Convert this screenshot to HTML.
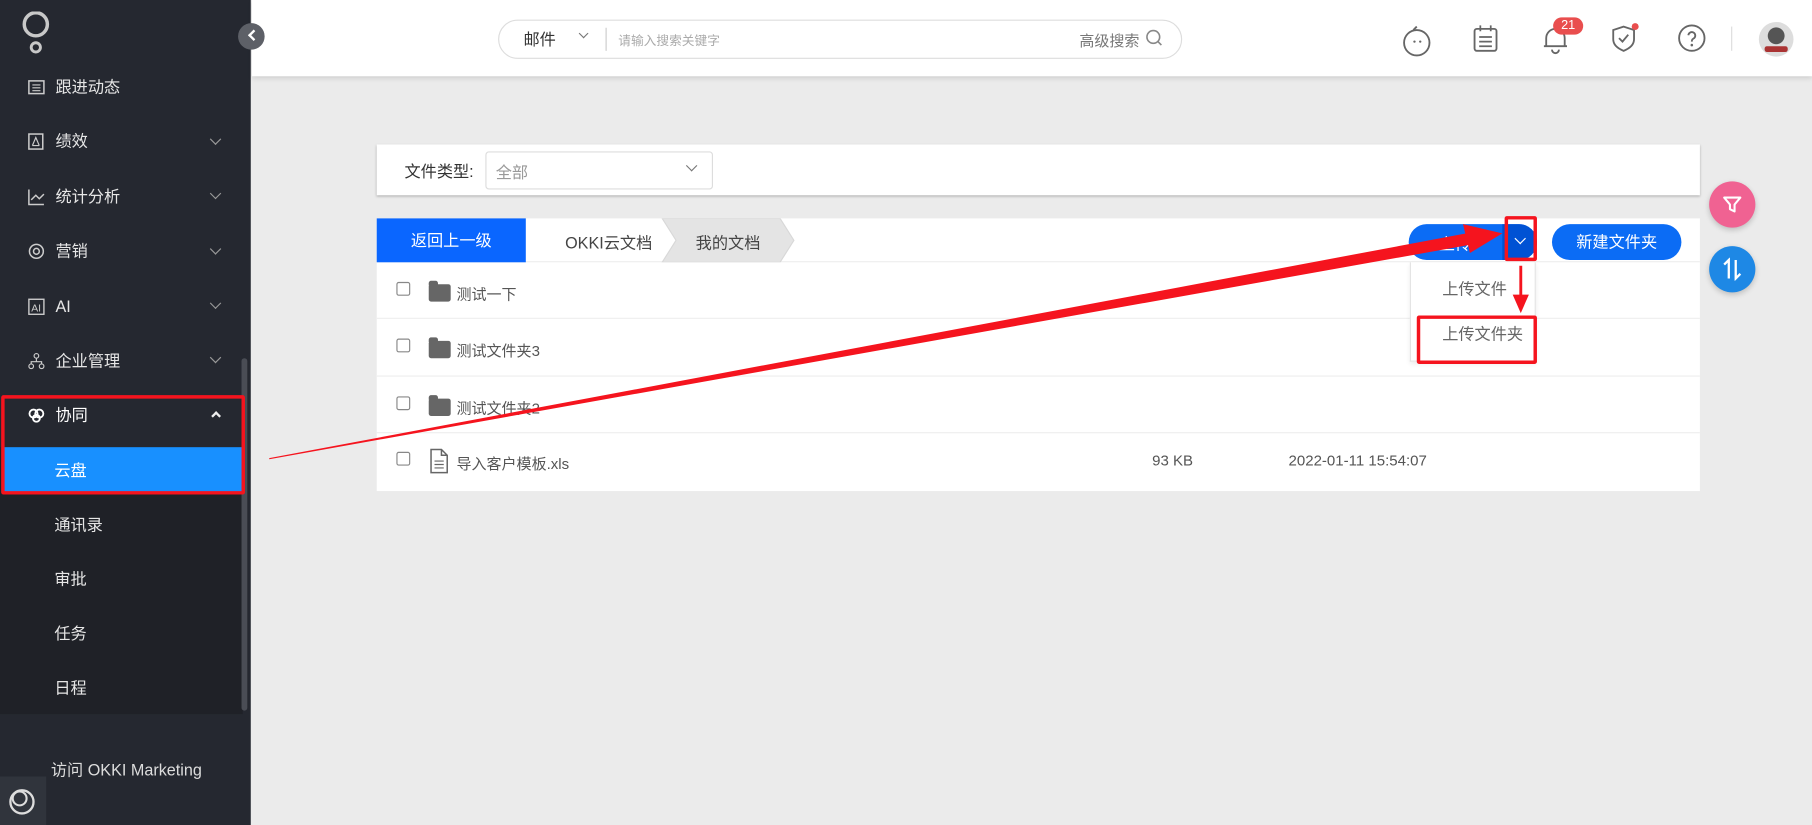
<!DOCTYPE html>
<html><head><meta charset="utf-8"><style>
*{margin:0;padding:0;box-sizing:border-box}
html,body{width:1812px;height:825px;overflow:hidden;background:#ebebeb}
#w{position:absolute;left:0;top:0;width:1568px;height:714px;transform:scale(1.15561,1.15546);transform-origin:0 0;font-family:"Liberation Sans","Noto Sans CJK SC",sans-serif;background:#ebebeb}
.a{position:absolute}
.sb{left:0;top:0;width:217px;height:714px;background:#252830}
.mi{position:absolute;left:24px;color:#e6e6e6;font-size:14px;height:20px;line-height:20px;display:flex;align-items:center}
.mi svg{margin-right:9px}
.chev{position:absolute;left:183px;width:7px;height:7px;border-right:1.5px solid #999;border-bottom:1.5px solid #999;transform:rotate(45deg)}
.sub{position:absolute;left:47px;color:#e6e6e6;font-size:14px}
.t{font-size:13px;color:#555;position:absolute}
.row{position:absolute;left:0;width:1145px;height:49px;border-bottom:1.5px solid #eee}
.cb{position:absolute;left:17px;width:12px;height:12px;border:1px solid #888;border-radius:2px}
.fd{position:absolute;left:45px;width:19px;height:15px;background:#666;border-radius:2px}
.fd:before{content:"";position:absolute;left:0;top:-3px;width:8px;height:4px;background:#666;border-radius:2px 2px 0 0}
</style></head><body><div id="w">
<div class="a sb"></div>
<div class="a" style="left:0;top:387px;width:210px;height:231px;background:#1f2127"></div>
<div class="a" style="left:209px;top:310px;width:5px;height:305px;background:#4a4d55;border-radius:3px"></div>
<div class="a" style="left:0;top:672px;width:40px;height:42px;background:#30343c"></div>
<svg class="a" style="left:5px;top:680px" width="28" height="28"><circle cx="14" cy="14" r="10" fill="none" stroke="#ddd" stroke-width="2"/><circle cx="12" cy="11" r="6" fill="none" stroke="#ddd" stroke-width="1.8"/></svg>
<svg class="a" style="left:18px;top:10px" width="28" height="38"><circle cx="13" cy="11" r="10" fill="none" stroke="#c8c8c8" stroke-width="3"/><circle cx="13" cy="31" r="4" fill="none" stroke="#c8c8c8" stroke-width="2.5"/></svg>

<div class="mi" style="top:65px"><svg width="15" height="13"><rect x="1" y="1" width="13" height="11" fill="none" stroke="#ccc" stroke-width="1.3"/><path d="M4 4.5h7M4 7h7M4 9.5h7" stroke="#ccc"/></svg>跟进动态</div>
<div class="mi" style="top:112px"><svg width="15" height="15"><rect x="1" y="1" width="12" height="13" fill="none" stroke="#ccc" stroke-width="1.3"/><path d="M4 11L7 4 10 11M4 11h6" stroke="#ccc" fill="none"/></svg>绩效</div><div class="chev" style="top:117px"></div>
<div class="mi" style="top:160px"><svg width="15" height="15"><path d="M1 1v13h13M3 10l4-4 3 3 4-4" stroke="#ccc" fill="none" stroke-width="1.3"/></svg>统计分析</div><div class="chev" style="top:164px"></div>
<div class="mi" style="top:207px"><svg width="15" height="15"><circle cx="7.5" cy="7.5" r="6" fill="none" stroke="#ccc" stroke-width="1.3"/><circle cx="7.5" cy="7.5" r="2.5" fill="none" stroke="#ccc" stroke-width="1.3"/></svg>营销</div><div class="chev" style="top:212px"></div>
<div class="mi" style="top:255px"><svg width="15" height="15"><rect x="1" y="1" width="13" height="13" fill="none" stroke="#ccc" stroke-width="1.2"/><text x="3" y="11.5" font-size="9" fill="#ccc" font-family="Liberation Sans">AI</text></svg>AI</div><div class="chev" style="top:259px"></div>
<div class="mi" style="top:302px"><svg width="15" height="15"><circle cx="7.5" cy="3" r="2" fill="none" stroke="#ccc"/><circle cx="3" cy="12" r="2" fill="none" stroke="#ccc"/><circle cx="12" cy="12" r="2" fill="none" stroke="#ccc"/><path d="M7.5 5v3M3 10V8h9v2" stroke="#ccc" fill="none"/></svg>企业管理</div><div class="chev" style="top:306px"></div>
<div class="mi" style="top:349px;color:#fff"><svg width="15" height="13"><circle cx="5" cy="5" r="3.5" fill="none" stroke="#fff" stroke-width="1.6"/><circle cx="10" cy="5" r="3.5" fill="none" stroke="#fff" stroke-width="1.6"/><circle cx="7.5" cy="9" r="3" fill="none" stroke="#fff" stroke-width="1.6"/></svg>协同</div>
<div class="a" style="left:184px;top:357px;width:6px;height:6px;border-left:2px solid #eee;border-top:2px solid #eee;transform:rotate(45deg)"></div>
<div class="a" style="left:2px;top:387px;width:209px;height:40px;background:#1890ff"></div>
<div class="sub" style="top:397px;color:#fff">云盘</div>
<div class="sub" style="top:444px">通讯录</div>
<div class="sub" style="top:491px">审批</div>
<div class="sub" style="top:538px">任务</div>
<div class="sub" style="top:585px">日程</div>
<div class="a" style="left:44px;top:656px;color:#ddd;font-size:14px">访问 OKKI Marketing</div>
<div class="a" style="left:1px;top:342px;width:211px;height:86px;border:3px solid #f5141e;border-radius:2px"></div>

<div class="a" style="left:218px;top:0;width:1350px;height:66px;background:#fff;box-shadow:0 2px 4px rgba(0,0,0,.12)"></div>
<div class="a" style="left:206px;top:20px;width:23px;height:23px;border-radius:50%;background:#5d6067"></div>
<div class="a" style="left:216px;top:27px;width:7px;height:7px;border-left:2px solid #fff;border-bottom:2px solid #fff;transform:rotate(45deg)"></div>
<div class="a" style="left:431px;top:17px;width:592px;height:34px;border:1px solid #ddd;border-radius:17px"></div>
<div class="a" style="left:453px;top:24px;font-size:14px;color:#333">邮件</div>
<div class="a" style="left:502px;top:26px;width:6px;height:6px;border-right:1.3px solid #777;border-bottom:1.3px solid #777;transform:rotate(45deg)"></div>
<div class="a" style="left:524px;top:24px;width:1px;height:20px;background:#ccc"></div>
<div class="a" style="left:535px;top:27px;font-size:11px;color:#aaa">请输入搜索关键字</div>
<div class="a" style="left:934px;top:25px;font-size:13px;color:#777">高级搜索</div>
<svg class="a" style="left:991px;top:25px" width="16" height="16"><circle cx="7" cy="7" r="5.5" fill="none" stroke="#888" stroke-width="1.4"/><path d="M11 11l3 3" stroke="#888" stroke-width="1.4"/></svg>
<svg class="a" style="left:1213px;top:20px" width="28" height="30"><circle cx="13" cy="17" r="11" fill="none" stroke="#666" stroke-width="1.6"/><path d="M10 6 L13 3" stroke="#666" stroke-width="1.6"/><circle cx="11" cy="16" r="1" fill="#666"/><circle cx="16" cy="16" r="1" fill="#666"/></svg>
<svg class="a" style="left:1274px;top:21px" width="24" height="26"><rect x="2" y="4" width="19" height="19" rx="2" fill="none" stroke="#666" stroke-width="1.6"/><path d="M7 1v5M16 1v5M6 11h11M6 15h11M6 19h11" stroke="#666" stroke-width="1.5"/></svg>
<svg class="a" style="left:1334px;top:20px" width="26" height="28"><path d="M4 20V13a8 8 0 0116 0v7M2 20h20M9 23a3 3 0 006 0" fill="none" stroke="#666" stroke-width="1.6"/></svg>
<div class="a" style="left:1344px;top:15px;width:26px;height:15px;background:#e94e4e;border-radius:8px;color:#fff;font-size:11px;text-align:center;line-height:15px">21</div>
<svg class="a" style="left:1394px;top:20px" width="26" height="28"><path d="M11 3l9 3v8c0 5-4 8-9 10-5-2-9-5-9-10V6z" fill="none" stroke="#666" stroke-width="1.6"/><path d="M7 13l3 3 5-6" fill="none" stroke="#666" stroke-width="1.6"/></svg>
<div class="a" style="left:1412px;top:20px;width:6px;height:6px;border-radius:50%;background:#e94e4e"></div>
<svg class="a" style="left:1452px;top:21px" width="26" height="26"><circle cx="12" cy="12" r="11" fill="none" stroke="#666" stroke-width="1.6"/><path d="M9 9.5a3 3 0 115 2.5c-1.3.8-2 1.3-2 3" fill="none" stroke="#666" stroke-width="1.6"/><circle cx="12" cy="18" r="1.1" fill="#666"/></svg>
<div class="a" style="left:1498px;top:23px;width:1px;height:21px;background:#ddd"></div>
<div class="a" style="left:1522px;top:19px;width:30px;height:30px;border-radius:50%;background:radial-gradient(circle at 50% 40%,#555 0 30%,#ddd 32%)"></div>
<div class="a" style="left:1527px;top:40px;width:20px;height:5px;background:#a33;border-radius:2px"></div>

<div class="a" style="left:326px;top:125px;width:1145px;height:44px;background:#fff;box-shadow:0 1px 2px rgba(0,0,0,.25)"></div>
<div class="a" style="left:350px;top:138px;font-size:14px;color:#333">文件类型:</div>
<div class="a" style="left:420px;top:131px;width:197px;height:33px;border:1px solid #ddd;border-radius:3px"></div>
<div class="a" style="left:429px;top:139px;font-size:14px;color:#999">全部</div>
<div class="a" style="left:595px;top:140px;width:7px;height:7px;border-right:1.3px solid #777;border-bottom:1.3px solid #777;transform:rotate(45deg)"></div>

<div class="a" style="left:326px;top:189px;width:1145px;height:236px;background:#fff">
 <div class="a" style="left:0;top:0;width:1145px;height:38px;border-bottom:1.5px solid #eee"></div>
 <div class="a" style="left:0;top:0;width:129px;height:38px;background:#0a66ff;color:#fff;font-size:14px;text-align:center;line-height:38px">返回上一级</div>
 <div class="a" style="left:163px;top:11px;font-size:14px;color:#444">OKKI云文档</div>
 <svg class="a" style="left:245px;top:0" width="120" height="38"><path d="M2 0H104L116 19 104 38H2L14 19Z" fill="#e4e4e4" stroke="#d8d8d8"/></svg>
 <div class="a" style="left:276px;top:11px;font-size:14px;color:#444">我的文档</div>
 <div class="row" style="top:38px"><div class="cb" style="top:17px"></div><div class="fd" style="top:19px"></div><div class="t" style="left:69px;top:17px">测试一下</div></div>
 <div class="row" style="top:88px"><div class="cb" style="top:16px"></div><div class="fd" style="top:18px"></div><div class="t" style="left:69px;top:16px">测试文件夹3</div></div>
 <div class="row" style="top:137px"><div class="cb" style="top:17px"></div><div class="fd" style="top:19px"></div><div class="t" style="left:69px;top:17px">测试文件夹2</div></div>
 <div class="row" style="top:187px;border:none"><div class="cb" style="top:15px"></div>
  <svg class="a" style="left:46px;top:12px" width="16" height="22"><path d="M1 1h9l5 5v15H1z M10 1v5h5" fill="none" stroke="#666" stroke-width="1.3"/><path d="M4 11h8M4 14h8M4 17h8" stroke="#666"/></svg>
  <div class="t" style="left:69px;top:15px">导入客户模板.xls</div><div class="t" style="left:671px;top:15px">93 KB</div><div class="t" style="left:789px;top:15px">2022-01-11 15:54:07</div></div>
</div>
<div class="a" style="left:1219px;top:194px;width:111px;height:31px;background:#0b6cf5;border-radius:16px;overflow:hidden"><div class="a" style="left:81px;top:0;width:30px;height:31px;background:#0052d4"></div></div>
<div class="a" style="left:1245px;top:201px;font-size:14px;color:#fff">上传</div>
<div class="a" style="left:1312px;top:203px;width:7px;height:7px;border-right:1.5px solid #fff;border-bottom:1.5px solid #fff;transform:rotate(45deg)"></div>
<div class="a" style="left:1343px;top:194px;width:112px;height:31px;background:#0b6cf5;border-radius:16px;color:#fff;font-size:14px;text-align:center;line-height:31px">新建文件夹</div>
<div class="a" style="left:1220px;top:227px;width:109px;height:86px;background:#fff;border:1px solid #e4e4e4;border-top:none;box-shadow:0 2px 4px rgba(0,0,0,.08)"></div>
<div class="a" style="left:1248px;top:240px;font-size:14px;color:#666">上传文件</div>
<div class="a" style="left:1248px;top:279px;font-size:14px;color:#666">上传文件夹</div>
<div class="a" style="left:1302px;top:187px;width:28px;height:39px;border:3px solid #f5141e;border-radius:2px"></div>
<div class="a" style="left:1226px;top:273px;width:104px;height:42px;border:3px solid #f5141e;border-radius:2px"></div>
<svg class="a" style="left:0;top:0" width="1568" height="714">
 <path d="M233 396.5L1274 201L1277 211L233 397.5Z" fill="#f5141e"/>
 <path d="M1266 194L1300 202L1272 219Z" fill="#f5141e"/>
 <path d="M1316 230V258" stroke="#f5141e" stroke-width="2.5"/>
 <path d="M1309 255L1316 271L1323 255Z" fill="#f5141e"/>
</svg>
<div class="a" style="left:1479px;top:157px;width:40px;height:40px;border-radius:50%;background:#f06292;box-shadow:0 2px 5px rgba(0,0,0,.2)"></div>
<svg class="a" style="left:1490px;top:168px" width="18" height="18"><path d="M2 3h14l-5 6v6l-4-2V9z" fill="none" stroke="#fff" stroke-width="1.8" stroke-linejoin="round"/></svg>
<div class="a" style="left:1479px;top:213px;width:40px;height:40px;border-radius:50%;background:#1e88e5;box-shadow:0 2px 5px rgba(0,0,0,.2)"></div>
<svg class="a" style="left:1490px;top:223px" width="18" height="20"><path d="M6 18V2L2 6M12 2v16l4-4" fill="none" stroke="#fff" stroke-width="2"/></svg>
</div></body></html>
